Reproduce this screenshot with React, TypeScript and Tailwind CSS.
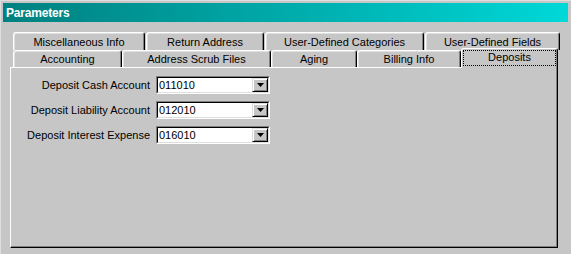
import React from 'react'

const font = { fontFamily: '"Liberation Sans", Arial, sans-serif' }

type Tab = { label: string; w: string }

const backRow: Tab[] = [
  { label: 'Miscellaneous Info', w: 'w-[132px]' },
  { label: 'Return Address', w: 'w-[118px]' },
  { label: 'User-Defined Categories', w: 'w-[159px]' },
  { label: 'User-Defined Fields', w: 'w-[135px]' },
]

const frontRow: Tab[] = [
  { label: 'Accounting', w: 'w-[109px]' },
  { label: 'Address Scrub Files', w: 'w-[149px]' },
  { label: 'Aging', w: 'w-[86px]' },
  { label: 'Billing Info', w: 'w-[104px]' },
]

const fields = [
  { label: 'Deposit Cash Account', value: '011010' },
  { label: 'Deposit Liability Account', value: '012010' },
  { label: 'Deposit Interest Expense', value: '016010' },
]

function TabButton({ tab, h }: { tab: Tab; h: string }) {
  return (
    <div
      className={`${tab.w} ${h} shrink-0 flex items-center justify-center bg-[#c6c6c6] border-l border-t border-r border-l-white border-t-white border-r-black rounded-t-[3px] shadow-[inset_1px_1px_0_#dfdfdf,inset_-1px_0_0_#808080] text-[11px] text-black leading-none pt-px`}
    >
      {tab.label}
    </div>
  )
}

function Combo({ value }: { value: string }) {
  return (
    <div className="w-[114px] h-[18px] flex border border-t-[#808080] border-l-[#808080] border-r-white border-b-white">
      <div className="flex-1 flex border border-t-black border-l-black border-r-[#dfdfdf] border-b-[#dfdfdf] bg-white">
        <span className="flex-1 text-[11px] leading-[14px] pl-px text-black">{value}</span>
        <div className="w-[16px] h-[14px] flex items-center justify-center bg-[#c6c6c6] border border-t-[#dfdfdf] border-l-[#dfdfdf] border-r-black border-b-black shadow-[inset_1px_1px_0_white,inset_-1px_-1px_0_#808080]">
          <svg width="7" height="4" viewBox="0 0 7 4">
            <path d="M0 0h7L3.5 4z" fill="#000" />
          </svg>
        </div>
      </div>
    </div>
  )
}

export default function App() {
  return (
    <div style={font} className="w-[571px] h-[254px] bg-[#c6c6c6] flex flex-col border-l border-t border-l-[#dfdfdf] border-t-[#dfdfdf] p-[2px] pr-[2px] select-none">
      {/* Title bar */}
      <div className="h-[19px] mr-[1px] flex items-center px-[3px] bg-gradient-to-r from-[#008080] to-[#00d8d8]">
        <span className="text-white font-bold text-[12px] leading-none tracking-[-0.2px]">Parameters</span>
      </div>

      {/* Tab control */}
      <div className="flex flex-col pl-[7px] pt-[10px]">
        <div className="flex pl-[3px] gap-[1px]">
          {backRow.map(t => <TabButton key={t.label} tab={t} h="h-[18px]" />)}
        </div>
        <div className="flex pl-[3px] relative z-10">
          {frontRow.map(t => <TabButton key={t.label} tab={t} h="h-[17px]" />)}
          <div className="w-[97px] h-[20px] -mt-[2px] -mb-px pb-[2px] shrink-0 flex items-center justify-center bg-[#c6c6c6] border-l border-t border-r border-l-white border-t-white border-r-black rounded-t-[3px] shadow-[inset_-1px_0_0_#808080]">
            <span className="w-[93px] h-[16px] flex items-center justify-center outline outline-1 outline-dotted outline-black -outline-offset-1 text-[11px] leading-none text-black">
              Deposits
            </span>
          </div>
        </div>

        {/* Panel */}
        <div className="w-[548px] h-[181px] border-l border-t border-r border-b border-l-white border-t-white border-r-black border-b-black shadow-[inset_-1px_-1px_0_#808080] pt-[8px]">
          <div className="grid grid-cols-[139px_114px] gap-x-[6px] gap-y-[7px] items-center">
            {fields.map(f => (
              <React.Fragment key={f.label}>
                <span className="text-[11px] text-black text-right leading-none">{f.label}</span>
                <Combo value={f.value} />
              </React.Fragment>
            ))}
          </div>
        </div>
      </div>
    </div>
  )
}
